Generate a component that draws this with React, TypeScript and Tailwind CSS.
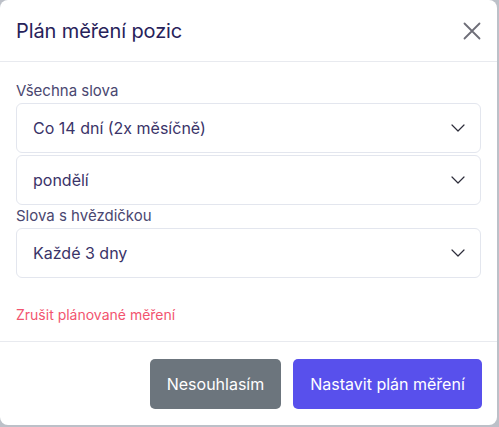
const selects = [
  { label: "Všechna slova", values: ["Co 14 dní (2x měsíčně)", "pondělí"] },
  { label: "Slova s hvězdičkou", values: ["Každé 3 dny"] },
];

const Chevron = () => (
  <svg width="14" height="8" viewBox="0 0 14 8" fill="none" className="shrink-0">
    <path d="M1 1l6 6 6-6" stroke="#2d2d3a" strokeWidth="1.2" strokeLinecap="round" strokeLinejoin="round" />
  </svg>
);

const SelectBox = ({ value, first }: { value: string; first: boolean }) => (
  <div
    className={`${first ? "mt-px" : "mt-[2px]"} h-[50px] flex items-center justify-between pl-4 pr-[15px] border border-[#e3e6ee] rounded-md text-[16px] text-[#3a3368]`}
  >
    <span>{value}</span>
    <Chevron />
  </div>
);

export default function App() {
  return (
    <div className="w-[499px] h-[427px] bg-[#bcc0c8] font-['Inter',sans-serif]">
      <div className="w-[497px] h-[425px] bg-white rounded-lg flex flex-col">
        {/* Header */}
        <div className="h-[62px] flex items-center justify-between pl-4 pr-[16px] border-b border-[#e8eaef]">
          <h1 className="text-[20px] text-[#27225a] tracking-[-0.1px]">Plán měření pozic</h1>
          <svg width="18" height="18" viewBox="0 0 18 18" className="mt-[1px]">
            <path d="M1.5 1.5l15 15M16.5 1.5l-15 15" stroke="#6e6e78" strokeWidth="1.8" strokeLinecap="round" />
          </svg>
        </div>

        {/* Body */}
        <div className="px-4 pt-[18px] pb-4 border-b border-[#e8eaef]">
          {selects.map((group) => (
            <div key={group.label}>
              <div className="text-[15px] leading-[22px] text-[#4a4770]">{group.label}</div>
              {group.values.map((v, i) => (
                <SelectBox key={v} value={v} first={i === 0} />
              ))}
            </div>
          ))}
          <div className="mt-[27px] text-[14px] leading-5 text-[#f2546f]">Zrušit plánované měření</div>
        </div>

        {/* Footer */}
        <div className="flex justify-end gap-3 pt-[17px] pr-[15px]">
          <button className="h-[50px] w-[131px] rounded-[5px] bg-[#6c757d] text-white text-[16px]">
            Nesouhlasím
          </button>
          <button className="h-[50px] w-[189px] rounded-[5px] bg-[#5850ec] text-white text-[16px]">
            Nastavit plán měření
          </button>
        </div>
      </div>
    </div>
  );
}
